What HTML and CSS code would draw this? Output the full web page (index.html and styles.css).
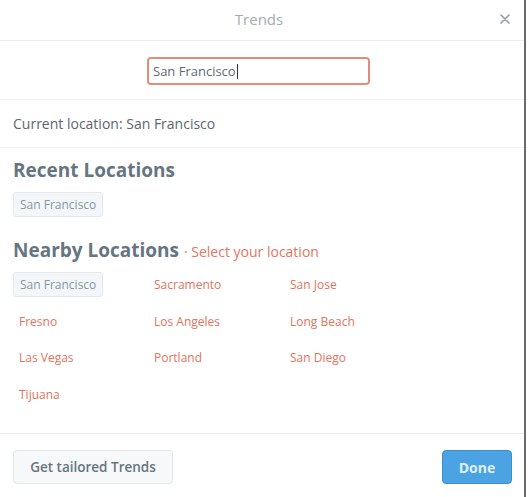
FILE: index.html
```html
<!DOCTYPE html>
<html>
<head>
<meta charset="utf-8">
<link rel="stylesheet" href="styles.css">
</head>
<body>
<div class="modal">
  <div class="header">
    <span class="title">Trends</span>
    <span class="close">
      <svg width="10" height="10" viewBox="0 0 10 10"><path d="M1 1L9 9M9 1L1 9" stroke="#8f9ba5" stroke-width="1.6" stroke-linecap="round"/></svg>
    </span>
  </div>
  <div class="search">
    <div class="input">San Francisco<span class="caret"></span></div>
  </div>
  <div class="current">Current location: San Francisco</div>
  <div class="content">
    <h2 class="heading">Recent Locations</h2>
    <div class="recent"><span class="tag">San Francisco</span></div>
    <h2 class="heading nearby-h">Nearby Locations <span class="sub">· Select your location</span></h2>
    <div class="grid">
      <span class="tag">San Francisco</span>
      <span class="loc">Sacramento</span>
      <span class="loc">San Jose</span>
      <span class="loc">Fresno</span>
      <span class="loc">Los Angeles</span>
      <span class="loc">Long Beach</span>
      <span class="loc">Las Vegas</span>
      <span class="loc">Portland</span>
      <span class="loc">San Diego</span>
      <span class="loc">Tijuana</span>
    </div>
  </div>
  <div class="footer">
    <button class="btn-tailored">Get tailored Trends</button>
    <button class="btn-done">Done</button>
  </div>
</div>
</body>
</html>
```
FILE: styles.css
```css
html, body {
  margin: 0;
  padding: 0;
  background: #fff;
}
body {
  font-family: "Open Sans", "Liberation Sans", sans-serif;
  color: #66757f;
}
.modal {
  width: 526px;
  height: 497px;
  border-right: 2px solid #6a6a6a;
  display: flex;
  flex-direction: column;
  box-sizing: border-box;
}
.header {
  height: 40px;
  border-bottom: 1px solid #e9eef1;
  display: flex;
  align-items: center;
  justify-content: center;
  position: relative;
}
.title {
  font-size: 15px;
  color: #a3adb5;
  margin-top: -2px;
  margin-left: -6px;
}
.close {
  position: absolute;
  right: 14px;
  top: 14px;
  display: flex;
}
.search {
  height: 59px;
  border-bottom: 1px solid #eef1f3;
  display: flex;
  justify-content: center;
  padding-top: 16px;
  box-sizing: border-box;
}
.input {
  width: 223px;
  height: 28px;
  box-sizing: border-box;
  border: 2px solid #e18d7a;
  border-radius: 4px;
  font-size: 13px;
  color: #5f6b73;
  padding-left: 4px;
  display: flex;
  align-items: center;
  margin-left: -7px;
}
.caret {
  width: 1px;
  height: 15px;
  background: #333;
  margin-left: 1px;
}
.current {
  height: 47px;
  border-bottom: 1px solid #eef1f3;
  display: flex;
  align-items: center;
  padding-left: 13px;
  font-size: 14px;
  color: #5c666d;
}
.content {
  flex: 1;
  padding: 10px 13px 0;
  border-bottom: 1px solid #e9eef1;
}
.heading {
  margin: 0;
  font-size: 19px;
  font-weight: 700;
  color: #66757f;
  line-height: 24px;
}
.recent {
  margin-top: 10px;
  display: flex;
}
.tag {
  display: inline-flex;
  align-items: center;
  height: 25px;
  padding: 0 6px;
  box-sizing: border-box;
  background: #f3f7fa;
  border: 1px solid #e1e9ee;
  border-radius: 3px;
  font-size: 12px;
  color: #8a969e;
  justify-self: start;
}
.nearby-h {
  margin-top: 21px;
}
.sub {
  font-size: 14px;
  font-weight: 400;
  color: #e3765f;
}
.grid {
  margin-top: 8px;
  display: grid;
  grid-template-columns: 135px 136px 136px;
  grid-auto-rows: 25px;
  row-gap: 11.5px;
  align-items: center;
}
.loc {
  font-size: 12px;
  color: #e2735c;
  padding-left: 6px;
}
.footer {
  height: 63px;
  display: flex;
  align-items: flex-start;
  justify-content: space-between;
  padding: 16px 12px 0 13px;
  box-sizing: border-box;
}
.btn-tailored {
  font-family: inherit;
  width: 160px;
  height: 34px;
  background: #f6f8f9;
  border: 1px solid #e1e7eb;
  border-radius: 4px;
  font-size: 13.5px;
  font-weight: 600;
  color: #66757f;
}
.btn-done {
  font-family: inherit;
  width: 70px;
  height: 34px;
  background: #4ba3e3;
  border: 1px solid #3b8fd0;
  border-radius: 4px;
  font-size: 14px;
  font-weight: 700;
  color: #dff0fc;
}
```
